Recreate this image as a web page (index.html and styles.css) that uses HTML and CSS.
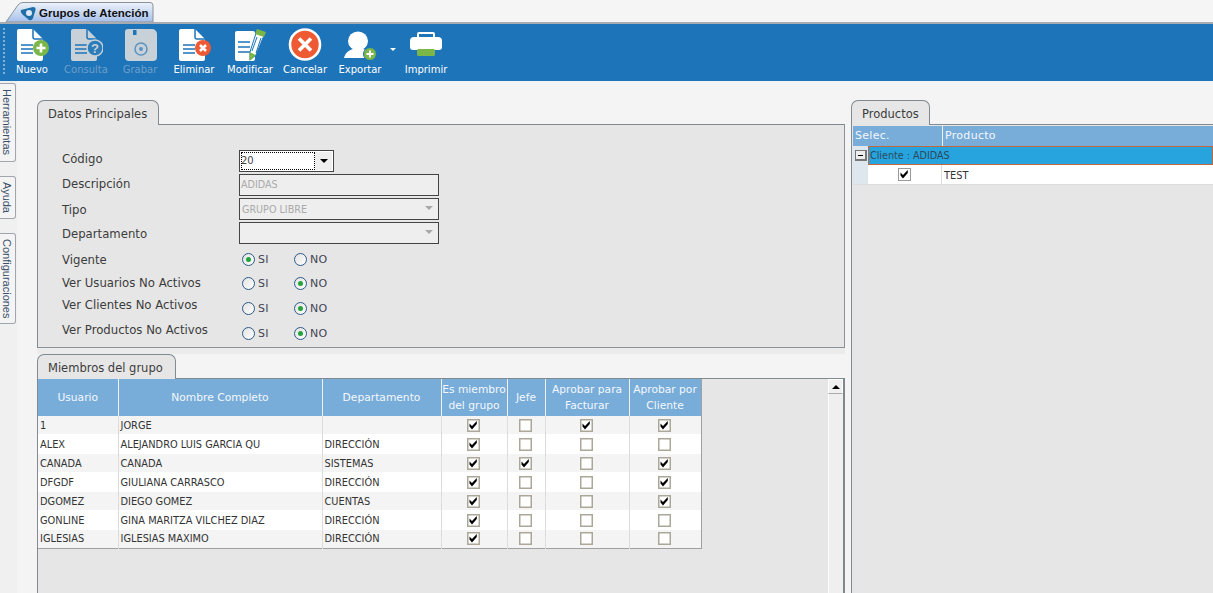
FILE: index.html
```html
<!DOCTYPE html>
<html lang="es">
<head>
<meta charset="utf-8">
<title>Grupos de Atención</title>
<link rel="stylesheet" href="styles.css">
</head>
<body>
<svg class="sprite" aria-hidden="true">
  <symbol id="chk" viewBox="0 0 13 13"><path d="M2.500 4.500 L5 7 L9.800 2 V5 L5 10.500 L2.500 7.500 Z" fill="#000"/></symbol>
  <symbol id="doc" viewBox="0 0 34 34"><path d="M2 3a2 2 0 0 1 2-2h14l10 10v20a2 2 0 0 1-2 2H4a2 2 0 0 1-2-2Z" fill="currentColor"/><path d="M18 1v8a2 2 0 0 0 2 2h8" fill="none" stroke="#1d74b8" stroke-width="1.500"/><path d="M6 17h12M6 21h12M6 25h12" stroke="#1d74b8" stroke-width="1.500"/></symbol>
</svg>

<header class="tabstrip">
  <div class="doc-tab">
    <svg class="doc-tab-shape" width="155" height="23" viewBox="0 0 155 23"><defs><linearGradient id="tabg" x1="0" y1="0" x2="0" y2="1"><stop offset="0" stop-color="#eef2fa"/><stop offset="1" stop-color="#a6c0ea"/></linearGradient></defs><path d="M6 23 L18 6 Q20 3.500 23 3.500 H150 Q153 3.500 153 6.500 V23 Z" fill="url(#tabg)" stroke="#8a9199"/></svg>
    <svg class="doc-tab-logo" width="16" height="14" viewBox="0 0 16 14"><path d="M1 3 L13 0 Q16 0 15.500 3 L13 11 Q12 14 9 13 L3 8 Q0 5 1 3Z" fill="#1f6ea8"/><circle cx="9" cy="6" r="3" fill="#dfeaf6"/></svg>
    <span class="doc-tab-text">Grupos de Atención</span>
  </div>
</header>

<nav class="toolbar">
  <div class="gripper"></div>
  <div class="tool">
    <svg class="ico" width="34" height="34"><use href="#doc" color="#fff"/><circle cx="26" cy="20" r="8" fill="#7ab648"/><path d="M26 15.500v9M21.500 20h9" stroke="#fff" stroke-width="2.600"/></svg>
    <span>Nuevo</span>
  </div>
  <div class="tool off">
    <svg class="ico" width="34" height="34"><use href="#doc" color="#c8d0d8"/><circle cx="26" cy="20" r="8" fill="#2d7cba" stroke="#c8d0d8" stroke-width="1.500"/><text class="qmark" x="26" y="25" text-anchor="middle">?</text></svg>
    <span>Consulta</span>
  </div>
  <div class="tool off">
    <svg class="ico" width="34" height="34"><path d="M5 1h24a5 5 0 0 1 5 5v23a4 4 0 0 1-4 4H6a4 4 0 0 1-4-4V4a3 3 0 0 1 3-3Z" fill="#c8d0d8"/><rect x="10" y="2" width="3.500" height="5" fill="#1d74b8"/><circle cx="18" cy="21" r="6" fill="none" stroke="#5c93c0" stroke-width="1.500"/><circle cx="18" cy="21" r="2" fill="#5c93c0"/></svg>
    <span>Grabar</span>
  </div>
  <div class="tool">
    <svg class="ico" width="34" height="34"><use href="#doc" color="#fff"/><circle cx="26" cy="20" r="8" fill="#ee5a34"/><path d="M23 17l6 6M29 17l-6 6" stroke="#fff" stroke-width="2.600"/></svg>
    <span>Eliminar</span>
  </div>
  <div class="tool wide">
    <svg class="ico" width="34" height="34"><rect x="2" y="3" width="20" height="30" rx="2" fill="#fff"/><path d="M5 14h12M5 19h12M5 24h12" stroke="#1d74b8" stroke-width="1.500"/><path d="M24 2l8 3-9 22-6 5 0-8Z" fill="#fff" stroke="#1d74b8"/><path d="M24 1l9 3-2 5-9-3Z" fill="#7ab648"/><path d="M24 9l-5 14M28 10l-5 15" stroke="#1d74b8"/><path d="M16.500 24l6.500 3-6.500 6Z" fill="#7ab648"/></svg>
    <span>Modificar</span>
  </div>
  <div class="tool narrow">
    <svg class="ico" width="34" height="34"><circle cx="17" cy="16.500" r="15" fill="#ee5a34" stroke="#fff" stroke-width="2.600"/><path d="M11 10.500l12 12M23 10.500l-12 12" stroke="#fff" stroke-width="3.600"/></svg>
    <span>Cancelar</span>
  </div>
  <div class="tool wide">
    <svg class="ico" width="34" height="34"><ellipse cx="15" cy="13" rx="10" ry="9.500" fill="#fff"/><path d="M1 30c1-5 5-8 9-9h10c4 1 7 3 8 6l-1 3Z" fill="#fff"/><circle cx="27" cy="26" r="6.500" fill="#7ab648" stroke="#1d74b8"/><path d="M27 22.500v7M23.500 26h7" stroke="#fff" stroke-width="2"/></svg>
    <span>Exportar</span>
  </div>
  <div class="tool-caret"></div>
  <div class="tool">
    <svg class="ico" width="34" height="34"><path d="M9 9V6a1 1 0 0 1 1-1h14a1 1 0 0 1 1 1v3" fill="none" stroke="#fff" stroke-width="2"/><path d="M5 9h24a4 4 0 0 1 4 4v6a3 3 0 0 1-3 3H4a3 3 0 0 1-3-3v-6a4 4 0 0 1 4-4Z" fill="#fff"/><rect x="8" y="21" width="18" height="7" rx="1.500" fill="#7ab648"/></svg>
    <span>Imprimir</span>
  </div>
</nav>

<div class="workspace">
  <aside class="side">
    <div class="side-tab side-h">Herramientas</div>
    <div class="side-tab side-a">Ayuda</div>
    <div class="side-tab side-c">Configuraciones</div>
  </aside>

  <main class="columns">
    <section class="col-left">
      <div class="tab tab-datos">Datos Principales</div>
      <div class="panel panel-datos">
        <div class="labels">
          <div class="lbl l25">Código</div>
          <div class="lbl l26">Descripción</div>
          <div class="lbl l24">Tipo</div>
          <div class="lbl l26">Departamento</div>
          <div class="lbl l23">Vigente</div>
          <div class="lbl l22">Ver Usuarios No Activos</div>
          <div class="lbl l25">Ver Clientes No Activos</div>
          <div class="lbl l24">Ver Productos No Activos</div>
        </div>
        <div class="controls">
          <div class="combo combo-code"><span class="combo-focus">20</span><span class="combo-btn"><i class="arrow"></i></span></div>
          <div class="field field-off">ADIDAS</div>
          <div class="field field-off field-combo">GRUPO LIBRE<i class="arrow arrow-off"></i></div>
          <div class="field field-off field-combo"><i class="arrow arrow-off"></i></div>
          <div class="radios r25 r-first"><span class="radio on"></span><span class="rt rt-si">SI</span><span class="radio"></span><span class="rt">NO</span></div>
          <div class="radios r24"><span class="radio"></span><span class="rt rt-si">SI</span><span class="radio on"></span><span class="rt">NO</span></div>
          <div class="radios r26"><span class="radio"></span><span class="rt rt-si">SI</span><span class="radio on"></span><span class="rt">NO</span></div>
          <div class="radios r25"><span class="radio"></span><span class="rt rt-si">SI</span><span class="radio on"></span><span class="rt">NO</span></div>
        </div>
      </div>
      <div class="strip"></div>

      <div class="tab tab-miembros">Miembros del grupo</div>
      <div class="panel panel-miembros">
        <div class="grid-wrap">
          <table class="grid">
            <colgroup><col class="c1"><col class="c2"><col class="c3"><col class="c4"><col class="c5"><col class="c6"><col class="c7"></colgroup>
            <thead><tr><th>Usuario</th><th>Nombre Completo</th><th>Departamento</th><th>Es miembro<br>del grupo</th><th>Jefe</th><th>Aprobar para<br>Facturar</th><th>Aprobar por<br>Cliente</th></tr></thead>
            <tbody>
              <tr><td>1</td><td>JORGE</td><td></td><td><span class="cb"><svg><use href="#chk"/></svg></span></td><td><span class="cb"></span></td><td><span class="cb"><svg><use href="#chk"/></svg></span></td><td><span class="cb"><svg><use href="#chk"/></svg></span></td></tr>
              <tr><td>ALEX</td><td>ALEJANDRO LUIS GARCIA QU</td><td>DIRECCIÓN</td><td><span class="cb"><svg><use href="#chk"/></svg></span></td><td><span class="cb"></span></td><td><span class="cb"></span></td><td><span class="cb"></span></td></tr>
              <tr><td>CANADA</td><td>CANADA</td><td>SISTEMAS</td><td><span class="cb"><svg><use href="#chk"/></svg></span></td><td><span class="cb"><svg><use href="#chk"/></svg></span></td><td><span class="cb"></span></td><td><span class="cb"><svg><use href="#chk"/></svg></span></td></tr>
              <tr><td>DFGDF</td><td>GIULIANA CARRASCO</td><td>DIRECCIÓN</td><td><span class="cb"><svg><use href="#chk"/></svg></span></td><td><span class="cb"></span></td><td><span class="cb"></span></td><td><span class="cb"><svg><use href="#chk"/></svg></span></td></tr>
              <tr><td>DGOMEZ</td><td>DIEGO GOMEZ</td><td>CUENTAS</td><td><span class="cb"><svg><use href="#chk"/></svg></span></td><td><span class="cb"></span></td><td><span class="cb"></span></td><td><span class="cb"><svg><use href="#chk"/></svg></span></td></tr>
              <tr><td>GONLINE</td><td>GINA MARITZA VILCHEZ DIAZ</td><td>DIRECCIÓN</td><td><span class="cb"><svg><use href="#chk"/></svg></span></td><td><span class="cb"></span></td><td><span class="cb"></span></td><td><span class="cb"></span></td></tr>
              <tr><td>IGLESIAS</td><td>IGLESIAS MAXIMO</td><td>DIRECCIÓN</td><td><span class="cb"><svg><use href="#chk"/></svg></span></td><td><span class="cb"></span></td><td><span class="cb"></span></td><td><span class="cb"></span></td></tr>
            </tbody>
          </table>
          <div class="vscroll"><div class="vscroll-btn"><i class="arrow-up"></i></div><div class="vscroll-track"></div></div>
        </div>
      </div>
    </section>

    <section class="col-right">
      <div class="tab tab-productos">Productos</div>
      <div class="panel panel-productos">
        <div class="prod-head"><div class="ph1">Selec.</div><div class="ph2">Producto</div></div>
        <div class="prod-group"><div class="prod-gutter"><span class="expander"></span></div><div class="prod-group-label">Cliente : ADIDAS</div></div>
        <div class="prod-row"><div class="prod-gutter"></div><div class="prod-check"><span class="cb cb-thin"><svg><use href="#chk"/></svg></span></div><div class="prod-name">TEST</div></div>
      </div>
    </section>
  </main>
</div>
</body>
</html>
```

FILE: styles.css
```css
* { box-sizing: border-box; }
html, body { margin: 0; height: 593px; overflow: hidden; }
body { background: #f4f4f4; font-family: "DejaVu Sans", sans-serif; color: #3c3c3c; width: 1213px; }
.sprite { width: 0; height: 0; display: block; overflow: hidden; }

.tabstrip { height: 24px; background: #f5f5f5; border-bottom: 2px solid #a8acb0; padding-left: 0; }
.doc-tab { position: relative; width: 155px; height: 22px; overflow: hidden; display: flex; align-items: center; padding: 3px 0 0 39px; }
.doc-tab-shape { position: absolute; left: 0; top: -1px; }
.doc-tab-logo { position: absolute; left: 20px; top: 7px; }
.doc-tab-text { position: relative; font: bold 11.500px "Liberation Sans", sans-serif; color: #111; white-space: nowrap; }

.toolbar { height: 57px; background: #1d74b8; display: flex; padding-left: 5px; position: relative; }
.gripper { position: absolute; left: 3px; top: 4px; height: 46px; border-left: 2px dotted #7fb0d8; }
.tool { width: 54px; display: flex; flex-direction: column; align-items: center; color: #fff; font-size: 10px; padding-top: 4px; }
.tool.wide { width: 58px; }
.tool.narrow { width: 52px; }
.tool span { margin-top: 1px; white-space: nowrap; line-height: 14px; }
.tool.off { color: #6e9fc9; }
.ico { display: block; height: 34px; }
.qmark { font: bold 13px "Liberation Sans", sans-serif; fill: #c8d0d8; }
.tool-caret { width: 10px; }
.tool-caret::before { content: ""; display: block; margin: 24px 0 0 1px; width: 0; border: 3px solid transparent; border-top: 3px solid #fff; }

.workspace { display: flex; height: 512px; }
.side { width: 17px; background: #f0f0f0; display: flex; flex-direction: column; padding-top: 2px; flex: none; }
.side-tab { writing-mode: vertical-rl; width: 16px; border: 1px solid #a0a6ac; border-left: 0; border-radius: 0 3px 3px 0; background: #f4f4f4; font: 11px "Liberation Sans", sans-serif; color: #3a4f6a; line-height: 14px; text-align: center; padding-right: 1px; }
.side-h { height: 79px; }
.side-a { height: 43px; margin-top: 14px; }
.side-c { height: 91px; margin-top: 14px; }

.columns { display: flex; flex: 1; padding-left: 20px; gap: 6px; min-width: 0; }
.col-left { width: 808px; flex: none; padding-top: 19px; }
.col-right { flex: 1; padding-top: 19px; min-width: 0; }

.tab { height: 25px; background: #e6e6e6; border: 1px solid #7f8a91; border-bottom: 0; border-radius: 7px 7px 0 0; font-size: 11.500px; line-height: 27px; padding-left: 10px; color: #3c3c3c; position: relative; z-index: 1; }
.tab-datos { width: 122px; }
.tab-miembros { width: 139px; }
.tab-productos { width: 79px; }
.strip { height: 6px; background: #ebebeb; }

.panel { border-top: 1px solid #7f8a91; border-left: 1px solid #7f8a91; background: #e6e6e6; margin-top: -1px; }
.panel-datos { height: 224px; border-right: 1px solid #8a9299; border-bottom: 1px solid #8a9299; display: flex; padding: 21px 0 0 24px; }
.labels { width: 177px; flex: none; margin-top: 5px; }
.lbl { font-size: 11.700px; white-space: nowrap; line-height: 16px; }
.l22 { height: 22px; } .l23 { height: 23px; } .l24 { height: 24px; } .l25 { height: 25px; } .l26 { height: 26px; }
.controls { width: 200px; margin-top: 4px; display: flex; flex-direction: column; }
.field { height: 22px; width: 200px; margin-bottom: 2px; border: 1px solid #444; background: #eeeeee; color: #aaa; font-size: 9.600px; line-height: 20px; padding-left: 1px; position: relative; }
.field-combo { padding-left: 2px; line-height: 22px; }
.combo { display: flex; width: 95px; height: 22px; margin-bottom: 2px; border: 1px solid #444; background: #fff; padding: 1px; }
.combo-focus { flex: 1; outline: 1px dotted #000; outline-offset: -1px; font-size: 10px; line-height: 18px; color: #444; }
.combo-btn { width: 17px; background: #efefef; display: flex; align-items: center; justify-content: center; }
.arrow { width: 0; border: 4px solid transparent; border-top: 4px solid #000; border-bottom: 0; display: block; }
.arrow-off { position: absolute; right: 5px; top: 7px; border-top-color: #a8a8a8; }
.radios { display: flex; align-items: center; padding-left: 3px; font-size: 11px; color: #445; }
.r24 { height: 24px; } .r25 { height: 25px; } .r26 { height: 26px; }
.r-first { padding-top: 2px; }
.radio { width: 13px; height: 13px; border-radius: 50%; border: 1px solid #2c5a8c; background: linear-gradient(135deg, #e2e2e2, #fff); position: relative; flex: none; }
.radio.on::after { content: ""; position: absolute; left: 3px; top: 3px; width: 5px; height: 5px; border-radius: 50%; background: #22a43a; }
.rt { margin-left: 3px; letter-spacing: .2px; }
.rt-si { width: 36px; }

.panel-miembros { height: 216px; border-right: 2px solid #7d8890; }
.grid-wrap { display: flex; justify-content: space-between; height: 100%; background: #e6e6e6; }
.grid { border-collapse: collapse; table-layout: fixed; width: 663px; height: 169px; font-size: 9.800px; align-self: flex-start; border-bottom: 1px solid #a0a0a0; }
.c1 { width: 80px; } .c2 { width: 204px; } .c3 { width: 119px; } .c4 { width: 66px; } .c5 { width: 38px; } .c6 { width: 84px; } .c7 { width: 72px; }
.grid th { height: 37px; background: #78acd9; color: #f4f8fc; font-weight: normal; font-size: 10.700px; line-height: 16px; border-left: 1px solid #f0f0f0; padding: 0; text-align: center; white-space: nowrap; }
.grid th:first-child { border-left: 0; }
.grid td { padding: 0 0 0 2px; background: #fff; border-left: 1px solid #dcdcdc; white-space: nowrap; overflow: hidden; color: #333; text-align: left; }
.grid td:first-child { border-left: 0; }
.grid td:nth-child(n+4) { text-align: center; padding: 0 2px 0 0; }
.grid td:last-child, .grid th:last-child { border-right: 1px solid #a0a0a0; }
.grid tbody tr:nth-child(odd) { height: 18px; }
.grid tbody tr:nth-child(even) { height: 20px; }
.grid tbody tr:nth-child(odd) td { background: #f4f4f4; }
.cb { display: inline-block; width: 13px; height: 13px; border: 1px solid #aca899; box-shadow: inset 0 0 0 .5px #aca899; background: #fff; vertical-align: middle; position: relative; }
.cb svg { position: absolute; left: -1px; top: -1px; width: 13px; height: 13px; }
.cb-thin { border-color: #999; box-shadow: none; }

.vscroll { width: 15px; height: 100%; flex: none; display: flex; flex-direction: column; }
.vscroll-btn { height: 15px; background: #f0f0f0; border: 1px solid #fff; border-bottom-color: #aaa; display: flex; align-items: center; justify-content: center; }
.arrow-up { width: 0; border: 4px solid transparent; border-bottom: 4px solid #000; border-top: 0; display: block; }
.vscroll-track { flex: 1; background: #efefef; border-left: 1px solid #fff; }

.panel-productos { height: 469px; border-left: 1px solid #7f8a91; padding: 1px 0 0 1px; }
.prod-head { display: flex; height: 20px; background: #78acd9; color: #f4f8fc; font-size: 11px; line-height: 20px; letter-spacing: .3px; }
.ph1 { width: 89px; padding-left: 2px; }
.ph2 { flex: 1; border-left: 1px solid #f0f0f0; padding-left: 2px; }
.prod-group { display: flex; height: 19px; }
.prod-gutter { width: 15px; flex: none; background: #dfe7ee; display: flex; align-items: center; justify-content: center; }
.expander { width: 12px; height: 11px; background: #eee; border: 1px solid #777; border-width: 1px 2px 2px 1px; position: relative; }
.expander::after { content: ""; position: absolute; left: 2px; top: 4px; width: 5px; height: 1px; background: #000; }
.prod-group-label { flex: 1; background: #27a3dd; border: 1px solid #c0683c; font-size: 9.600px; line-height: 17px; padding-left: 1px; color: #2a4a60; }
.prod-row { display: flex; height: 20px; background: #fff; border-bottom: 1px solid #dcdcdc; }
.prod-check { width: 74px; border-right: 1px solid #dcdcdc; display: flex; align-items: center; justify-content: center; padding-right: 1px; }
.prod-name { flex: 1; font-size: 9.800px; line-height: 21px; padding-left: 2px; color: #333; }
```
